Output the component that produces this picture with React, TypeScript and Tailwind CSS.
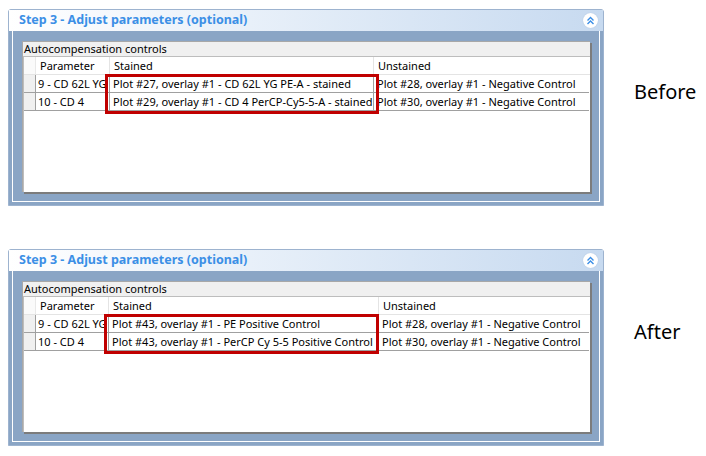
const panels = [
  {
    label: 'Before',
    cols: [74, 264, 215],
    rows: [
      ['9 - CD 62L YG', 'Plot #27, overlay #1 - CD 62L YG PE-A - stained', 'Plot #28, overlay #1 - Negative Control'],
      ['10 - CD 4', 'Plot #29, overlay #1 - CD 4 PerCP-Cy5-5-A - stained', 'Plot #30, overlay #1 - Negative Control'],
    ],
    box: 'left-[81px] w-[274px]',
  },
  {
    label: 'After',
    cols: [73, 270, 210],
    rows: [
      ['9 - CD 62L YG', 'Plot #43, overlay #1 - PE Positive Control', 'Plot #28, overlay #1 - Negative Control'],
      ['10 - CD 4', 'Plot #43, overlay #1 - PerCP Cy 5-5 Positive Control', 'Plot #30, overlay #1 - Negative Control'],
    ],
    box: 'left-[80px] w-[275px]',
  },
];

function CollapseIcon() {
  return (
    <span className="flex h-[15px] w-[15px] items-center justify-center rounded-full bg-white shadow-[0_0_1px_#9fb8d6]">
      <svg width="9" height="9" viewBox="0 0 9 9" fill="none" stroke="#3a8ee6" strokeWidth={1.4}>
        <path d="M1.5 4.5 L4.5 1.5 L7.5 4.5" />
        <path d="M1.5 8 L4.5 5 L7.5 8" />
      </svg>
    </span>
  );
}

function Panel({ panel }: { panel: (typeof panels)[number] }) {
  const [c1, c2, c3] = panel.cols;
  return (
    <div className="flex h-[197px] w-[596px] flex-col rounded-tl-[3px] rounded-tr-[3px] border border-[#9db3cf] bg-[#8aa5c5]">
      {/* title bar */}
      <div className="flex h-[21px] items-center justify-between bg-gradient-to-r from-white to-[#c7daf0] pl-[10px] pr-[5px]">
        <span className="text-[12.5px] font-bold text-[#3b8fe6]">Step 3 - Adjust parameters (optional)</span>
        <CollapseIcon />
      </div>
      <div className="flex flex-1 px-[3px] pb-[3px]">
        <div className="flex flex-1 border-b border-l border-r border-white p-[9px] pt-[10px]">
          {/* group box */}
          <div className="flex flex-1 flex-col border-l border-t border-[#a8a8a8] bg-[#f0f0f0] shadow-[2px_2px_0_#7c7c7c]">
            <div className="h-[14px] pl-[1px] text-[11px] leading-[13px] text-black">Autocompensation controls</div>
            <div className="relative flex-1 border-l border-t border-[#bdbdbd] bg-white">
              {/* header */}
              <div className="flex h-[18px] border-b border-[#e4e4e4] text-[11px] leading-[17px]">
                <div className="w-[12px] border-r border-[#e8e8e8] bg-[#fafafa]" />
                <div className="border-r border-[#e4e4e4] pl-[4px]" style={{ width: c1 }}>Parameter</div>
                <div className="border-r border-[#e4e4e4] pl-[4px]" style={{ width: c2 }}>Stained</div>
                <div className="pl-[4px]" style={{ width: c3 }}>Unstained</div>
              </div>
              {panel.rows.map((r, i) => (
                <div key={i} className="flex h-[18px] text-[11px] leading-[17px]">
                  <div className="w-[12px] border-b border-r border-[#a0a0a0] bg-[#f0f0f0]" />
                  <div className="overflow-hidden whitespace-nowrap border-b border-r border-[#a0a0a0] pl-[2px]" style={{ width: c1 }}>{r[0]}</div>
                  <div className="overflow-hidden whitespace-nowrap border-b border-r border-[#a0a0a0] pl-[3px]" style={{ width: c2 }}>{r[1]}</div>
                  <div className="overflow-hidden whitespace-nowrap border-b border-[#a0a0a0] pl-[3px]" style={{ width: c3 }}>{r[2]}</div>
                </div>
              ))}
              {/* highlight */}
              <div className={`absolute top-[17px] h-[40px] border-[3px] border-[#c00000] ${panel.box}`} />
            </div>
          </div>
        </div>
      </div>
    </div>
  );
}

export default function App() {
  return (
    <div className="flex h-[456px] w-[706px] flex-col gap-[43px] bg-white pl-[8px] pt-[9px] font-['Noto_Sans',sans-serif] text-black">
      {panels.map((p) => (
        <div key={p.label} className="flex items-start">
          <Panel panel={p} />
          <div className="ml-[30px] mt-[69px] text-[20px] leading-[28px]">{p.label}</div>
        </div>
      ))}
    </div>
  );
}
